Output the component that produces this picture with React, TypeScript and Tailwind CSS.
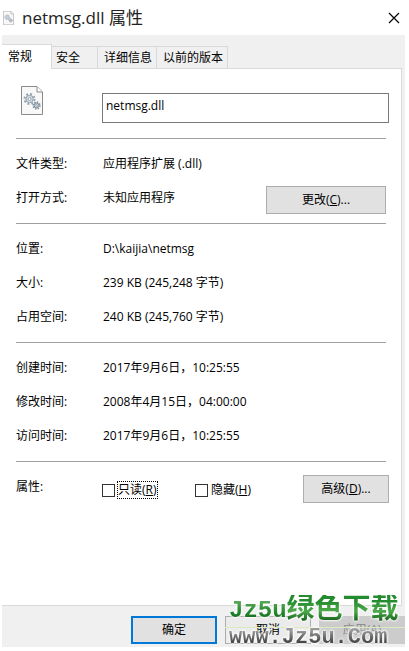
import type { ReactNode } from 'react';

const TABS = ['安全', '详细信息', '以前的版本'];

function GearFileIcon({ className }: { className: string }) {
  return (
    <svg viewBox="0 0 22 29" fill="none" className={className} aria-hidden="true">
      <path d="M.5.5h15.500l5.500 5.500v22.500H.5z" fill="#f8f8f8" stroke="#8a8a8a" />
      <path d="M16 .8v5.200h5.200" fill="#fff" stroke="#8a8a8a" />
      <circle cx="8.500" cy="13" r="5" stroke="#91a0ad" strokeWidth="2" strokeDasharray="1.900 2.027" />
      <circle cx="8.500" cy="13" r="3.700" fill="#d5dee6" stroke="#91a0ad" />
      <circle cx="8.500" cy="13" r="1.500" fill="#fff" stroke="#91a0ad" />
      <circle cx="15.500" cy="19.500" r="3.400" stroke="#7d8d9b" strokeWidth="1.600" strokeDasharray="1.300 1.370" />
      <circle cx="15.500" cy="19.500" r="2.500" fill="#c8d3dc" stroke="#7d8d9b" />
      <circle cx="15.500" cy="19.500" r=".9" fill="#fff" stroke="#7d8d9b" strokeWidth=".7" />
    </svg>
  );
}

function Section({ children }: { children: ReactNode }) {
  return <dl className="mr-[3px] border-t border-[#a0a0a0] pt-2 pb-2">{children}</dl>;
}

function Row({ label, children }: { label: string; children: ReactNode }) {
  return (
    <div className="flex h-[34px] items-center">
      <dt className="w-[87px] shrink-0">{label}</dt>
      <dd className="flex min-w-0 flex-1 items-center justify-between">{children}</dd>
    </div>
  );
}

export default function App() {
  return (
    <main className="relative bg-white pr-1 pb-1 pl-0.5 font-['Open_Sans','Noto_Sans_CJK_SC',sans-serif] text-[12px] leading-4 text-black">
      <header className="flex h-[35px] items-center pr-[5px]">
        <GearFileIcon className="ml-px h-[14px] w-[11px]" />
        <h1 className="ml-2 flex-1 text-[17px] leading-6 text-[#222]">netmsg.dll 属性</h1>
        <button type="button" aria-label="关闭" className="flex size-3 items-center justify-center">
          <svg viewBox="0 0 12 12" className="size-3" stroke="#000" strokeWidth="1.200">
            <path d="M1 1l10 10M11 1L1 11" />
          </svg>
        </button>
      </header>

      <div className="bg-[#f0f0f0] pt-[9px]">
        <div role="tablist" className="flex items-end">
          <button type="button" role="tab" aria-selected="true" className="-mb-px h-[25px] w-[50px] border-t border-r border-[#d9d9d9] bg-white pl-1.5 text-left">
            常规
          </button>
          {TABS.map((tab) => (
            <button key={tab} type="button" role="tab" aria-selected="false" className="h-[22px] border-t border-r border-[#d9d9d9] pr-1 pl-[6px] text-left nth-2:w-[46px] nth-2:pl-1">
              {tab}
            </button>
          ))}
        </div>

        <section className="mr-[3px] border-t border-r border-b border-[#d9d9d9] bg-white pr-3 pl-[14px]">
          <div className="-mt-px flex items-start pt-[18px] pb-[15px]">
            <div className="w-[86px] shrink-0 pl-[5px]">
              <GearFileIcon className="h-[29px] w-[22px]" />
            </div>
            <input
              type="text"
              aria-label="文件名"
              defaultValue="netmsg.dll"
              className="mt-[7px] h-[30px] min-w-0 flex-1 border border-[#7a7a7a] bg-white px-[3px] pb-[6px] outline-none"
            />
          </div>

          <Section>
            <Row label="文件类型:">应用程序扩展 (.dll)</Row>
            <Row label="打开方式:">
              <span>未知应用程序</span>
              <button type="button" className="mt-1 h-7 w-[120px] border border-[#adadad] bg-[#e1e1e1]">
                更改(<u>C</u>)...
              </button>
            </Row>
          </Section>

          <Section>
            <Row label="位置:">D:\kaijia\netmsg</Row>
            <Row label="大小:">239 KB (245,248 字节)</Row>
            <Row label="占用空间:">240 KB (245,760 字节)</Row>
          </Section>

          <Section>
            <Row label="创建时间:">2017年9月6日，10:25:55</Row>
            <Row label="修改时间:">2008年4月15日，04:00:00</Row>
            <Row label="访问时间:">2017年9月6日，10:25:55</Row>
          </Section>

          <div className="mr-[3px] border-t border-[#a0a0a0]" />
          <div className="flex items-start pt-[13px] pb-[100px]">
            <span className="mt-1 w-[86px] shrink-0">属性:</span>
            <label className="flex h-[30px] w-[93px] items-center gap-0.5">
              <input type="checkbox" className="size-[13px] appearance-none border border-[#333] bg-white checked:bg-[#333]" />
              <span className="border border-dotted border-black">
                只读(<u>R</u>)
              </span>
            </label>
            <label className="flex h-[30px] flex-1 items-center gap-[3px]">
              <input type="checkbox" className="size-[13px] appearance-none border border-[#333] bg-white checked:bg-[#333]" />
              <span>
                隐藏(<u>H</u>)
              </span>
            </label>
            <button type="button" className="h-7 w-[86px] border border-[#adadad] bg-[#e1e1e1]">
              高级(<u>D</u>)...
            </button>
          </div>
        </section>

        <footer className="flex justify-end gap-2 pt-2.5 pb-[3px]">
          <button type="button" className="h-7 w-[86px] border-2 border-[#0078d7] bg-[#e1e1e1]">
            确定
          </button>
          <button type="button" className="h-7 w-[86px] border border-[#adadad] bg-[#ebebeb]">
            取消
          </button>
          <button type="button" disabled className="h-7 w-[86px] bg-[#cccccc] text-[#8d8d8d]">
            应用(A)
          </button>
        </footer>
      </div>

      {/* site watermark */}
      <div className="pointer-events-none absolute right-1 bottom-1 w-[180px] font-['Liberation_Mono','Noto_Sans_CJK_SC',monospace] font-bold whitespace-nowrap">
        <div className="flex h-6 items-center pl-1 drop-shadow-[0_0_1px_#fff]">
          <span className="bg-linear-to-b from-[#58a858] from-20% via-[#238c2e] to-[#14651d] to-80% bg-clip-text text-[24px] leading-8 text-transparent drop-shadow-[0_0_1px_#fff]">Jz5u</span>
          <span className="bg-linear-to-b from-[#238c2e] from-20% via-[#4eaa4c] to-[#14651d] to-80% bg-clip-text text-[28px] leading-8 text-transparent drop-shadow-[0_0_1px_#fff]">绿色下载</span>
        </div>
        <div className="mt-1 h-px bg-[#dcebbf]" />
        <div className="flex h-[19px] items-center pl-1 drop-shadow-[0_0_1px_#fff]">
          <span className="bg-linear-to-b from-[#999] from-20% to-[#333] to-80% bg-clip-text text-[22px] leading-6 text-transparent drop-shadow-[0_0_1px_#fff]">www.Jz5u.Com</span>
        </div>
      </div>
    </main>
  );
}
